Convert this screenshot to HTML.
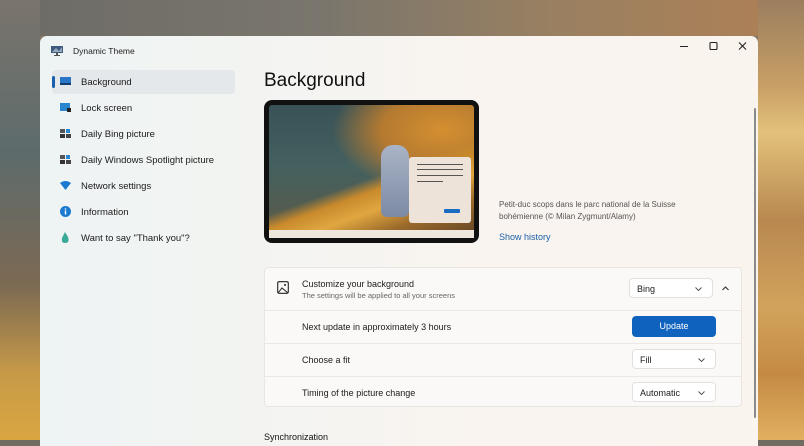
<!DOCTYPE html>
<html><head><style>
*{margin:0;padding:0;box-sizing:border-box}
body{width:804px;height:440px;overflow:hidden;position:relative;font-family:"Liberation Sans",sans-serif;
background:linear-gradient(180deg,#6f6a62 0%,#8a7a66 10%,#6e7470 40%,#8a7256 70%,#b08a4a 100%);}
.bgl{position:absolute;left:0;top:0;width:40px;height:440px;background:linear-gradient(180deg,#7a746c 0%,#5d6b6c 35%,#7c6a52 65%,#c79a48 85%,#d9a640 100%)}
.bgr{position:absolute;left:758px;top:0;width:46px;height:440px;background:linear-gradient(180deg,#9b7e5e 0%,#c9a066 20%,#e2c27a 30%,#b88850 50%,#d1a35c 70%,#c48a44 85%,#e0b060 100%)}
.bgt{position:absolute;left:0;top:0;width:804px;height:36px;background:linear-gradient(90deg,#6c6b66,#7a766d 40%,#9a8060 70%,#b08055)}
.win{position:absolute;left:40px;top:36px;width:718px;height:410px;border-radius:7px 7px 0 0;overflow:hidden;
background:linear-gradient(90deg,#eef3f4 0%,#f3f4f2 30%,#f9f4f0 60%,#faf4ef 100%)}
.title{position:absolute;left:33px;top:10px;font-size:8.5px;color:#222}
.nav{position:absolute;left:12px;width:183px;height:24px;font-size:9.5px;color:#1b1b1b;display:flex;align-items:center}
.nav .ic{position:absolute;left:8px;top:7px;width:11px;height:9px}
.nav span{position:absolute;left:29px}
.sel{background:#e4e8ea;border-radius:4px}
.sel::before{content:"";position:absolute;left:0;top:6px;width:2.5px;height:12px;background:#1b5fb0;border-radius:2px}
h1{position:absolute;left:224px;top:34px;font-size:19px;font-weight:normal;color:#111}
.prev{position:absolute;left:224px;top:64px;width:215px;height:143px;background:#111;border-radius:8px;padding:5px}
.img{width:205px;height:125px;position:relative;border-radius:3px 3px 0 0;overflow:hidden;
background:linear-gradient(160deg,transparent 0%,transparent 55%,#c98a2c 62%,#e0a640 72%,#9a6a2a 85%,#6a4a28 100%),
radial-gradient(ellipse at 85% 20%,#d48f30 0%,#b57a30 25%,transparent 45%),
linear-gradient(180deg,#395257 0%,#44605f 50%,#5a5a48 100%)}
.owl{position:absolute;left:112px;top:40px;width:28px;height:72px;background:linear-gradient(#aab4c6,#7c8aa4);border-radius:12px 12px 6px 6px}
.dlg{position:absolute;left:140px;top:52px;width:62px;height:66px;background:#ede3d8;border-radius:3px}
.dlg i{position:absolute;left:8px;height:1px;background:#555}
.strip{width:205px;height:8px;background:#efe6dd}
.cap{position:absolute;left:459px;top:163px;font-size:8px;color:#555;line-height:12px}
.hist{position:absolute;left:459px;top:196px;font-size:9px;color:#1a5fa8}
.card{position:absolute;left:224px;top:231px;width:478px;height:140px;background:#fbf9f7;border:1px solid #e9e5e1;border-radius:4px}
.row{position:absolute;left:0;width:476px;border-top:1px solid #ebe7e3}
.lbl{position:absolute;left:37px;font-size:9px;color:#1b1b1b}
.dd{position:absolute;width:84px;height:20px;background:#fff;border:1px solid #e2dfdc;border-radius:4px;font-size:9px;color:#1b1b1b;padding:5px 7px}
.dd svg{position:absolute;right:10px;top:8px}
.btn{position:absolute;left:367px;width:84px;height:21px;background:#0f62bd;border-radius:4px;color:#fff;font-size:9px;text-align:center;line-height:21px}
.sync{position:absolute;left:224px;top:396px;font-size:9px;color:#111}
.sb{position:absolute;left:714px;top:72px;width:2px;height:310px;background:#8a8a8a;border-radius:1px}
</style></head><body>
<div class="bgt"></div><div class="bgl"></div><div class="bgr"></div>
<div class="win">
<svg style="position:absolute;left:10px;top:8px" width="14" height="12" viewBox="0 0 14 12"><rect x="1" y="2" width="12" height="7" fill="#3d5a80"/><path d="M2 8 L6 4 L9 7 L12 3 L12 8Z" fill="#9ab"/><rect x="6" y="9" width="2" height="2" fill="#555"/><rect x="4" y="11" width="6" height="1" fill="#555"/></svg>
<div class="title">Dynamic Theme</div>
<svg style="position:absolute;left:640px;top:5px" width="110" height="12"><path d="M0 5.5 H8" stroke="#222" stroke-width="1"/><rect x="30" y="1.5" width="7" height="7" fill="none" stroke="#222" stroke-width="1.1" rx="1"/><path d="M59 1.5 L66 8.5 M66 1.5 L59 8.5" stroke="#222" stroke-width="1.1"/></svg>

<div class="nav sel" style="top:34px"><svg class="ic" viewBox="0 0 11 9"><rect width="11" height="8" fill="#2a76c6"/><rect y="6" width="11" height="2" fill="#123e6e"/></svg><span>Background</span></div>
<div class="nav" style="top:60px"><svg class="ic" viewBox="0 0 11 9"><rect width="10" height="8" fill="#2a86cf"/><rect x="7" y="5" width="4" height="4" fill="#222"/></svg><span>Lock screen</span></div>
<div class="nav" style="top:86px"><svg class="ic" viewBox="0 0 11 9"><rect width="5" height="4" fill="#555"/><rect y="5" width="5" height="4" fill="#333"/><rect x="6" y="5" width="5" height="4" fill="#444"/><rect x="6" width="4" height="4" fill="#2a86cf"/></svg><span>Daily Bing picture</span></div>
<div class="nav" style="top:112px"><svg class="ic" viewBox="0 0 11 9"><rect width="5" height="4" fill="#555"/><rect y="5" width="5" height="4" fill="#333"/><rect x="6" y="5" width="5" height="4" fill="#444"/><rect x="6" width="4" height="4" fill="#2a86cf"/></svg><span>Daily Windows Spotlight picture</span></div>
<div class="nav" style="top:138px"><svg class="ic" viewBox="0 0 11 9"><path d="M0 2 Q5.5 -2 11 2 L5.5 9Z" fill="#1a7ad0"/></svg><span>Network settings</span></div>
<div class="nav" style="top:164px"><svg class="ic" style="top:6px;height:11px" viewBox="0 0 11 11"><circle cx="5.5" cy="5.5" r="5.5" fill="#1a7ad0"/><rect x="4.8" y="4.5" width="1.4" height="4" fill="#fff"/><circle cx="5.5" cy="3" r=".8" fill="#fff"/></svg><span>Information</span></div>
<div class="nav" style="top:190px"><svg class="ic" style="top:6px;height:11px" viewBox="0 0 11 11"><path d="M5 0 L8 5 Q10 11 5 11 Q1 11 2 6Z" fill="#3aaa96"/></svg><span>Want to say "Thank you"?</span></div>

<h1>Background</h1>
<div class="prev"><div class="img"><div class="owl"></div><div class="dlg"><i style="top:7px;width:46px"></i><i style="top:12px;width:46px"></i><i style="top:18px;width:46px"></i><i style="top:24px;width:26px"></i><b style="position:absolute;left:35px;top:52px;width:16px;height:4px;background:#1a6cc2;border-radius:1px"></b></div></div><div class="strip"></div></div>
<div class="cap">Petit-duc scops dans le parc national de la Suisse<br>bohémienne (© Milan Zygmunt/Alamy)</div>
<div class="hist">Show history</div>

<div class="card">
<svg style="position:absolute;left:12px;top:13px" width="12" height="13" viewBox="0 0 12 13"><rect x=".7" y=".7" width="10.6" height="11.6" rx="1.5" fill="none" stroke="#222" stroke-width="1.1"/><path d="M1 12 L5 7 L11 12" fill="none" stroke="#222" stroke-width="1"/><circle cx="8" cy="4" r="1" fill="#222"/></svg>
<div class="lbl" style="top:11px">Customize your background</div>
<div class="lbl" style="top:23px;font-size:7.5px;color:#666">The settings will be applied to all your screens</div>
<div class="dd" style="left:364px;top:10px">Bing<svg width="7" height="4"><path d="M.5 .5 L3.5 3.5 L6.5 .5" fill="none" stroke="#555"/></svg></div>
<svg style="position:absolute;left:457px;top:18px" width="7" height="5"><path d="M.5 4 L3.5 1 L6.5 4" fill="none" stroke="#333" stroke-width="1.1"/></svg>
<div class="row" style="top:42px;height:33px"><div class="lbl" style="top:11px">Next update in approximately 3 hours</div><div class="btn" style="top:5px">Update</div></div>
<div class="row" style="top:75px;height:33px"><div class="lbl" style="top:11px">Choose a fit</div><div class="dd" style="left:367px;top:5px">Fill<svg width="7" height="4"><path d="M.5 .5 L3.5 3.5 L6.5 .5" fill="none" stroke="#555"/></svg></div></div>
<div class="row" style="top:108px;height:32px"><div class="lbl" style="top:11px">Timing of the picture change</div><div class="dd" style="left:367px;top:5px">Automatic<svg width="7" height="4"><path d="M.5 .5 L3.5 3.5 L6.5 .5" fill="none" stroke="#555"/></svg></div></div>
</div>
<div class="sync">Synchronization</div>
<div class="sb"></div>
</div>
</body></html>
